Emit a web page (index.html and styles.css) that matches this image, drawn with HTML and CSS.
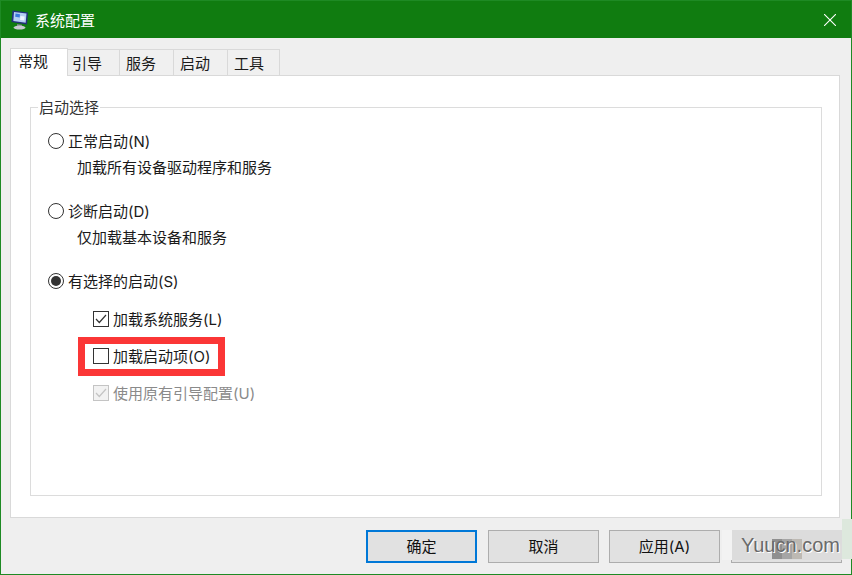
FILE: index.html
```html
<!DOCTYPE html>
<html lang="zh-CN">
<head>
<meta charset="utf-8">
<title>系统配置</title>
<link rel="stylesheet" href="styles.css">
</head>
<body>
<div class="window">
  <header class="titlebar">
    <svg class="app-icon" width="18" height="20" viewBox="0 0 18 20">
      <path d="M1.5 0.5 L17 2.5 L16 14.5 L0.5 12 Z" fill="#24307e"/>
      <path d="M3 2 L15.5 3.6 L14.7 12.8 L2.3 11 Z" fill="#b4cff2"/>
      <path d="M4.5 3.6 L9 4.2 L8.7 7.4 L4.2 6.8 Z" fill="#3a78dc"/>
      <path d="M9.4 6 L13.6 6.5 L13.3 10.4 L9.1 9.9 Z" fill="#eef5ff"/>
      <path d="M6 14 L11 14.8 L11 16.5 L6 16.5 Z" fill="#7d838a"/>
      <ellipse cx="8.5" cy="17.6" rx="6" ry="2" fill="#c6cbcf"/>
    </svg>
    <span class="title">系统配置</span>
    <svg class="close" width="12" height="12" viewBox="0 0 12 12">
      <path d="M0 0 L12 12 M12 0 L0 12" stroke="#fff" stroke-width="1.1" fill="none"/>
    </svg>
  </header>
  <main class="content">
    <nav class="tabs">
      <div class="tab active">常规</div>
      <div class="tab t2">引导</div>
      <div class="tab t3">服务</div>
      <div class="tab t3">启动</div>
      <div class="tab t4">工具</div>
    </nav>
    <section class="panel">
      <fieldset class="group">
        <legend>启动选择</legend>
        <div class="option"><span class="radio"></span>正常启动(N)</div>
        <div class="desc">加载所有设备驱动程序和服务</div>
        <div class="option second"><span class="radio"></span>诊断启动(D)</div>
        <div class="desc">仅加载基本设备和服务</div>
        <div class="option second"><span class="radio checked"></span>有选择的启动(S)</div>
        <div class="check first">
          <span class="box"><svg width="14" height="14" viewBox="0 0 14 14"><path d="M2 7 L5.3 10.5 L12 3" fill="none" stroke="#333" stroke-width="1.2"/></svg></span>加载系统服务(L)
        </div>
        <div class="check marked">
          <span class="box"></span>加载启动项(O)
          <span class="highlight"></span>
        </div>
        <div class="check disabled">
          <span class="box"><svg width="14" height="14" viewBox="0 0 14 14"><path d="M2 7 L5.3 10.5 L12 3" fill="none" stroke="#c4c4c4" stroke-width="1.2"/></svg></span>使用原有引导配置(U)
        </div>
      </fieldset>
    </section>
    <footer class="buttons">
      <div class="btn default">确定</div>
      <div class="btn">取消</div>
      <div class="btn">应用(A)</div>
      <div class="btn"></div>
    </footer>
  </main>
  <div class="watermark">
    <span class="wm-side"></span>
    <span class="wm-left"></span>
    <span class="wm-box"></span>
    <span class="wm-blocks"></span>
    <span class="wm-text">Yuucn.com</span>
  </div>
</div>
</body>
</html>
```
FILE: styles.css
```css
* { box-sizing: border-box; }
html, body { margin: 0; padding: 0; }
body {
  width: 852px;
  height: 575px;
  overflow: hidden;
  font-family: Inter, "Noto Sans CJK SC", sans-serif;
  font-size: 15px;
  color: #1a1a1a;
}
.window {
  position: relative;
  width: 852px;
  height: 575px;
  background: #efefef;
  border: 1px solid #1e8a24;
  display: flex;
  flex-direction: column;
}
.titlebar {
  height: 37px;
  flex: none;
  background: #107c10;
  display: flex;
  align-items: center;
  padding-left: 10px;
  color: #fff;
  font-family: "Noto Sans CJK SC", sans-serif;
}
.app-icon { flex: none; }
.title { margin-left: 6px; font-size: 15px; line-height: 20px; }
.close { margin-left: auto; margin-right: 15px; }
.content {
  flex: 1;
  display: flex;
  flex-direction: column;
  padding: 10px 11px 0 9px;
}
.tabs {
  display: flex;
  align-items: flex-end;
  height: 28px;
  position: relative;
  z-index: 1;
}
.tab {
  height: 26px;
  margin-bottom: 1px;
  padding-left: 6px;
  border: 1px solid #d9d9d9;
  border-left: 0;
  border-bottom: 0;
  background: #f0f0f0;
  font-family: "Noto Sans CJK SC", sans-serif;
  line-height: 25px;
}
.tab.active {
  width: 58px;
  height: 28px;
  margin-bottom: 0;
  padding-left: 7px;
  background: #fff;
  border-left: 1px solid #d9d9d9;
  line-height: 24px;
}
.t2 { width: 52px; padding-left: 4px; }
.t3 { width: 54px; }
.t4 { width: 52px; }
.panel {
  height: 443px;
  margin-top: -1px;
  background: #fff;
  border: 1px solid #d9d9d9;
  padding: 21px 17px 21px 19px;
}
.group {
  height: 399px;
  margin: 0;
  padding: 0 0 0 17px;
  border: 1px solid #dcdcdc;
}
.group legend {
  margin-left: -10px;
  padding: 0 1px;
  font-family: "Noto Sans CJK SC", sans-serif;
  font-size: 15px;
  line-height: 20px;
  color: #333;
}
.option {
  display: flex;
  align-items: center;
  height: 20px;
  padding-top: 2px;
  margin-top: 14px;
  gap: 4px;
  line-height: 20px;
}
.option.second { margin-top: 24px; }
.radio {
  width: 16px;
  height: 16px;
  flex: none;
  margin-top: -2px;
  border: 1px solid #333;
  border-radius: 50%;
  background: #fff;
  position: relative;
}
.radio.checked::after {
  content: "";
  position: absolute;
  left: 2px;
  top: 2px;
  width: 10px;
  height: 10px;
  border-radius: 50%;
  background: #333;
}
.desc {
  height: 20px;
  margin-top: 6px;
  margin-left: 29px;
  padding-top: 1px;
  line-height: 20px;
}
.check {
  position: relative;
  display: flex;
  align-items: center;
  height: 20px;
  padding-top: 2px;
  margin-top: 17px;
  margin-left: 45px;
  gap: 4px;
  line-height: 20px;
}
.check.first { margin-top: 18px; }
.box {
  width: 16px;
  height: 16px;
  flex: none;
  margin-top: -2px;
  border: 1px solid #333;
  background: #fff;
  display: block;
  line-height: 0;
}
.box svg { display: block; margin: 0; }
.check.disabled { color: #8a8a8a; }
.check.disabled .box { border-color: #c4c4c4; background: #f2f2f2; }
.highlight {
  position: absolute;
  left: -15px;
  top: -9px;
  width: 147px;
  height: 39px;
  border: 7px solid #fb3636;
  pointer-events: none;
}
.buttons {
  display: flex;
  justify-content: flex-end;
  gap: 11px;
  margin-top: 12px;
  margin-right: -2px;
}
.btn {
  width: 111px;
  height: 33px;
  background: #e1e1e1;
  border: 1px solid #adadad;
  text-align: center;
  line-height: 31px;
  color: #111;
}
.btn:nth-child(2) { margin-right: -1px; }
.btn.default {
  border: 2px solid #0078d7;
  line-height: 29px;
}
.watermark {
  position: absolute;
  left: 721px;
  top: 518px;
  width: 130px;
  height: 56px;
  pointer-events: none;
}
.wm-side {
  position: absolute;
  left: 120px;
  top: 0;
  width: 10px;
  height: 40px;
  background: #dde8dd;
}
.wm-left {
  position: absolute;
  left: 0;
  top: 11px;
  width: 10px;
  height: 30px;
  background: #f3f3f3;
}
.wm-box {
  position: absolute;
  left: 10px;
  top: 11px;
  width: 110px;
  height: 30px;
  background: #dcdcdc;
}
.wm-blocks {
  position: absolute;
  left: 50px;
  top: 20px;
  width: 30px;
  height: 20px;
  background: linear-gradient(90deg, #8f8f8f 0 33%, #a5a5a5 33% 66%, #bdb9b3 66% 100%);
}
.wm-text {
  position: absolute;
  left: 19px;
  top: 14px;
  font-family: "Liberation Sans", sans-serif;
  font-size: 20px;
  line-height: 24px;
  color: #6a6a6a;
  text-shadow: 1px 1px 0 #fff;
  white-space: nowrap;
}
```
